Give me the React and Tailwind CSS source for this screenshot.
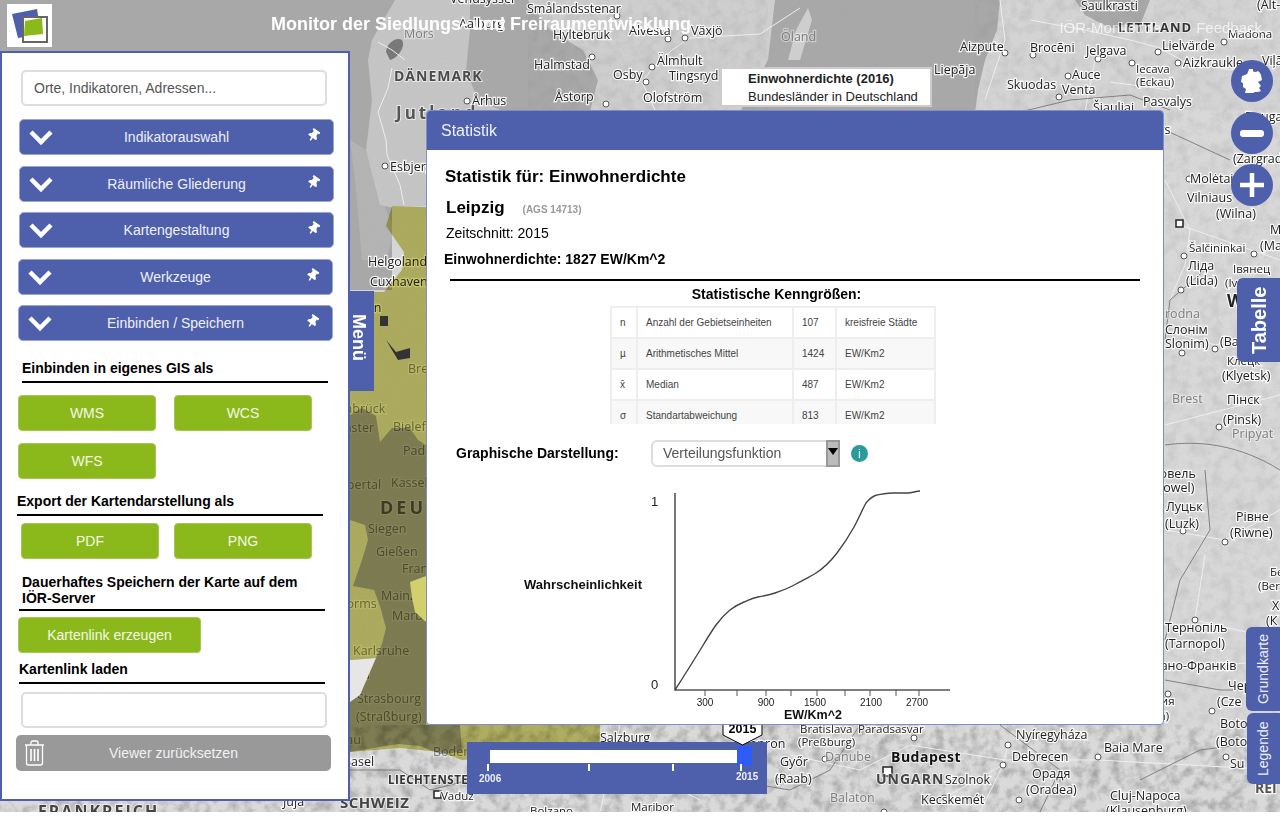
import { FaThumbtack } from "react-icons/fa";

// map labels: text, x, baseline y, kind (n normal, g faded, b bold city, c country)
const LABELS = [
  ["Vendsyssel", 450, 3, "n"], ["Smålandsstenar", 527, 13, "n"], ["Hyltebruk", 553, 39, "n"], ["Aalborg", 459, 28, "n"],
  ["Mors", 404, 38, "g"], ["Alvesta", 629, 35, "n"], ["Växjö", 691, 35, "n"], ["Halmstad", 534, 69, "n"], ["Älmhult", 657, 65, "n"],
  ["Osby", 613, 79, "n"], ["Tingsryd", 669, 80, "n"], ["Åstorp", 555, 101, "n"], ["Olofström", 643, 102, "n"], ["Århus", 472, 105, "n"],
  ["Öland", 781, 41, "g"], ["Aizpute", 960, 51, "n"], ["Brocēni", 1030, 52, "n"], ["Jelgava", 1086, 55, "n"], ["Liepāja", 934, 74, "n"],
  ["Skuodas", 1007, 89, "n"], ["Auce", 1072, 79, "n"], ["Venta", 1062, 94, "n"], ["Iecava", 1136, 73, "s"], ["(Eckau)", 1136, 86, "s"],
  ["Pasvalys", 1143, 106, "n"], ["Lielvärde", 1162, 50, "n"], ["Aizkraukle", 1183, 67, "n"], ["Madona", 1228, 38, "s"], ["Saulkrasti", 1081, 10, "n"],
  ["Viļāni", 1262, 65, "n"], ["(Alt-", 1257, 9, "n"], ["Šiauliai", 1093, 112, "n"], ["Daugavpils", 1245, 121, "n"], ["Panevėžys", 1110, 134, "n"], ["(Zargrad", 1233, 163, "n"],
  ["Molėtai", 1190, 183, "n"], ["Vilniaus", 1187, 202, "n"], ["(Wilna)", 1216, 218, "n"], ["M", 1270, 234, "n"], ["(Ma", 1260, 250, "n"],
  ["Šalčininkai", 1189, 252, "s"], ["Ліда", 1188, 270, "n"], ["(Lida)", 1186, 285, "n"], ["Iвянец", 1233, 273, "s"], ["(Iv", 1225, 287, "s"],
  ["W", 1227, 307, "b"], ["rodna", 1165, 318, "g"], ["Слонім", 1165, 334, "n"], ["Slonim)", 1165, 348, "n"], ["(Ba", 1220, 346, "n"],
  ["Клецк", 1227, 365, "s"], ["(Klyetsk)", 1222, 380, "n"], ["Brest", 1172, 403, "g"], ["Пінск", 1227, 404, "n"], ["(Pinsk)", 1223, 424, "n"], ["Pripyat", 1232, 438, "g"],
  ["Ковель", 1152, 478, "n"], ["(Kowel)", 1152, 492, "n"], ["Луцьк", 1166, 511, "n"], ["(Luzk)", 1165, 528, "n"], ["Рівне", 1236, 521, "n"], ["(Riwne)", 1230, 537, "n"],
  ["Бе", 1270, 576, "s"], ["(Ber", 1258, 590, "s"], ["Х", 1272, 610, "n"], ["(К", 1266, 625, "n"], ["Тернопіль", 1165, 632, "n"], ["(Tarnopol)", 1165, 648, "n"],
  ["Івано-Франків", 1150, 670, "n"], ["Чер", 1228, 690, "n"], ["(Cze", 1217, 706, "n"], ["Коломия", 1125, 705, "s"], ["(Kolomea)", 1115, 720, "s"], ["Boto", 1220, 728, "n"], ["(Boto", 1216, 746, "n"], ["Su", 1230, 768, "n"],
  ["REI", 1255, 793, "c"],
  ["Bratislava", 800, 733, "s"], ["(Preßburg)", 798, 746, "s"], ["Paradsasvar", 858, 733, "s"], ["Győr", 780, 766, "n"], ["(Raab)", 775, 783, "n"], ["Danube", 825, 761, "g"],
  ["Szolnok", 945, 784, "n"], ["Kecskemét", 921, 804, "n"], ["Balaton", 830, 802, "g"], ["Nyíregyháza", 1016, 739, "n"], ["Debrecen", 1012, 761, "n"],
  ["Орадя", 1032, 778, "n"], ["(Oradea)", 1026, 794, "n"], ["Baia Mare", 1104, 752, "n"], ["Cluj-Napoca", 1110, 800, "n"], ["(Klausenburg)", 1106, 815, "n"],
  ["Salzburg", 600, 742, "n"], ["Sopron", 743, 748, "n"], ["Maribor", 631, 811, "s"], ["Vaduz", 441, 800, "s"], ["Bolzano", 530, 815, "s"], ["Basel", 343, 766, "n"],
  ["Juja", 283, 806, "n"], ["Esbjerg", 390, 171, "n"], ["Helgoland", 368, 266, "n"], ["Cuxhaven", 370, 286, "n"], ["Bremerhaven", 302, 312, "n"],
  ["Bremen", 408, 373, "g"], ["Delmenhorst", 290, 372, "g"], ["Osnabrück", 322, 413, "g"], ["Münster", 325, 432, "g"], ["Bielefeld", 393, 431, "g"], ["Paderborn", 403, 455, "g"],
  ["Wuppertal", 320, 489, "g"], ["Kassel", 391, 487, "g"], ["Siegen", 368, 533, "g"], ["Gießen", 376, 556, "g"], ["Frankfurt", 402, 573, "g"], ["Mainz", 381, 600, "g"], ["Marburg", 392, 620, "g"],
  ["Worms", 335, 608, "g"], ["Karlsruhe", 353, 655, "g"], ["Pforzheim", 310, 679, "n"], ["Strasbourg", 357, 703, "g"], ["(Straßburg)", 356, 721, "g"], ["Freiburg im Breisgau", 240, 744, "g"],
  ["Bodensee", 433, 756, "g"],
];

const BIG_LABELS = [
  ["DÄNEMARK", 394, 81, 14, "#4a4a4a", 1],
  ["Jutland", 396, 119, 17, "#555", 3],
  ["LETTLAND", 1118, 32, 13, "#333", 1],
  ["DEUTSCHLAND", 380, 514, 18, "#666", 3],
  ["Budapest", 891, 762, 14, "#111", 0.5],
  ["UNGARN", 876, 784, 14, "#444", 1],
  ["LIECHTENSTEIN", 388, 784, 11.5, "#333", 0.5],
  ["SCHWEIZ", 340, 808, 15, "#444", 0.5],
  ["FRANKREICH", 38, 817, 16, "#444", 2],
];

const DOTS = [
  [592, 57], [617, 16], [668, 39], [685, 38], [652, 67], [646, 82], [606, 104], [467, 101], [1005, 53], [1033, 55], [1098, 59], [958, 71], [1068, 76],
  [1132, 63], [1158, 52], [1178, 63], [1224, 42], [1059, 97], [1189, 179], [1184, 256], [1254, 254], [1181, 290], [1182, 353], [1215, 349], [1219, 427],
  [1183, 531], [1225, 542], [1195, 620], [1212, 711], [1168, 694], [825, 759], [780, 776], [944, 798], [1008, 745], [1003, 765], [1019, 800], [1098, 757], [1226, 757], [914, 738], [884, 812], [385, 166],
];

const ROADS = [
  "M405 60L392 50L378 42M392 68L388 88L378 112L386 140L387 155L400 185L404 205",
  "M655 110L642 82L655 65L672 50L690 38L760 34L800 8",
  "M1000 0L1005 40L985 100M1030 20L1085 30L1130 40L1160 48L1185 62L1230 70L1280 60M1095 60L1085 112M1110 82L1170 90",
  "M1165 180L1190 230L1185 265L1170 300M1180 225L1280 260M1165 330L1215 345L1280 330M1165 425L1280 395",
  "M1165 530L1225 540L1280 510M1205 555L1195 620L1280 640M1165 670L1280 660",
  "M790 755L860 770L910 745L1005 760L1098 760L1280 770M1003 765L944 798M1008 745L1003 765L980 812M620 725L600 812M470 780L640 770L700 800",
];

const BORDERS = [
  "M1020 112L1070 100L1130 95L1170 110M1165 130L1230 160M1205 270L1170 300L1165 340M1165 445C1200 440 1240 445 1280 470",
  "M1205 470L1210 530L1180 580L1165 640M1165 680L1220 690L1280 690",
  "M1140 780L1200 750L1280 740M1000 725L1060 770L1040 812M860 725L830 770L790 790L730 780",
  "M350 770L400 770L430 790L470 780",
];

function MapBackground() {
  return (
    <svg className="absolute top-0 left-0 font-['Open_Sans',sans-serif]" width="1280" height="812" viewBox="0 0 1280 812">
      <defs>
        <filter id="hills" x="0" y="0" width="100%" height="100%">
          <feTurbulence type="fractalNoise" baseFrequency="0.09" numOctaves="4" seed="4" />
          <feColorMatrix values="0 0 0 0 0.25  0 0 0 0 0.25  0 0 0 0 0.25  1.5 0 0 0 -0.6" />
        </filter>
        <filter id="fine" x="0" y="0" width="100%" height="100%">
          <feTurbulence type="fractalNoise" baseFrequency="0.6" numOctaves="2" seed="8" />
          <feColorMatrix values="0 0 0 0 0.4  0 0 0 0 0.4  0 0 0 0 0.4  0.4 0 0 0 -0.1" />
        </filter>
      </defs>
      <rect width="1280" height="812" fill="#a8a8a8" />
      <path d="M366 150L350 140L355 180L362 260L385 262L395 230L384 205Z" fill="#b4b4b4" />
      <path d="M395 0L372 40L368 60L372 100L366 150L380 205L426 215L560 215L590 112L598 80L583 50L550 30L528 0Z" fill="#c6c6c6" />
      <path d="M470 0L470 30L466 70L478 100L505 112L590 112L598 80L583 50L550 30L528 0Z" fill="#a8a8a8" />
      <path d="M528 0L550 30L583 50L598 80L590 112L740 112L768 60L775 0Z" fill="#d0d0d0" />
      <path d="M1000 0L997 30L985 60L978 90L975 112L975 725L1280 725L1280 0Z" fill="#d6d6d6" />
      <path d="M1075 0L1085 15L1110 28L1140 25L1150 0Z" fill="#a8a8a8" />
      <path d="M350 725H1280V812H0V801H350Z" fill="#dcdcdc" />
      <path d="M1164 110H1280V725H1164Z" fill="#dadada" />
      <path d="M350 290H640V725H350Z" fill="#d8d8d8" />
      <path d="M392 206H640V290H392Z" fill="#d8d8d8" />
      <path d="M788 60L796 30L808 8L812 20L800 60Z" fill="#d0d0d0" />
      <path d="M386 52C386 44 396 36 402 40C406 46 398 58 390 60Z" fill="#777" />
      <rect width="1280" height="812" filter="url(#fine)" opacity="0.5" />
      <rect x="975" width="305" height="725" filter="url(#hills)" opacity="0.3" />
      <rect x="528" width="240" height="112" filter="url(#hills)" opacity="0.3" />
      <rect y="725" width="1280" height="87" filter="url(#hills)" opacity="0.9" />
      <g fill="none" stroke="#eee" strokeWidth="1">
        {ROADS.map((d) => <path key={d} d={d} />)}
      </g>
      <g fill="none" stroke="#777" strokeWidth="0.9">
        {BORDERS.map((d) => <path key={d} d={d} />)}
      </g>
      {DOTS.map(([x, y]) => (
        <circle key={`${x}-${y}`} cx={x} cy={y} r="3" fill="#fff" stroke="#555" strokeWidth="1" />
      ))}
      <rect x="883" y="767" width="9" height="9" fill="#fff" stroke="#222" strokeWidth="1.5" />
      <rect x="434" y="791" width="7" height="7" fill="#fff" stroke="#222" strokeWidth="1.5" />
      <rect x="1176" y="220" width="7" height="7" fill="#fff" stroke="#222" strokeWidth="1.5" />
      {LABELS.map(([t, x, y, k]) => (
        <text
          key={t + x}
          x={x}
          y={y}
          fontSize={k === "s" ? 11.5 : k === "c" ? 14 : k === "b" ? 17 : 12.5}
          fontWeight={k === "b" || k === "c" ? 700 : 400}
          fill={k === "g" ? "#7d7d7d" : k === "c" ? "#555" : "#222"}
          stroke="#fff"
          strokeOpacity={k === "g" ? 0.4 : 0.85}
          strokeWidth="2.4"
          paintOrder="stroke"
        >
          {t}
        </text>
      ))}
      {BIG_LABELS.map(([t, x, y, size, color, ls]) => (
        <text key={t} x={x} y={y} fontSize={size} fontWeight="700" fill={color} letterSpacing={ls} stroke="#fff" strokeOpacity="0.6" strokeWidth="2" paintOrder="stroke">
          {t}
        </text>
      ))}
      {/* choropleth layer over germany */}
      <path className="mix-blend-multiply" d="M392 206L640 214V725H600V742L575 752L462 760L440 752L400 748L350 752V292H384L392 282L402 270L404 252L386 226Z" fill="#cdcb70" />
      <path className="mix-blend-multiply" d="M350 415L362 408L376 416L380 442L392 428L410 428L418 440L426 445V725H460L462 752L440 754L420 746L398 744L350 752V660L376 658L382 644L386 628L380 606L374 590L353 586L362 560L368 540L365 525L350 520Z" fill="#b8b8dc" />
      <path d="M410 582L426 576V622L415 612L412 598Z" fill="#d2d06d" />
      <path d="M350 660L376 658L360 695L350 702Z" fill="#e6e6e6" />
      <path d="M388 316H380V326H388Z" fill="#333" />
      <path d="M386 340L396 352L410 348V358L398 360Z" fill="#333" />
    </svg>
  );
}

function Logo() {
  return (
    <svg className="block bg-white" width="45" height="43" viewBox="0 0 45 43">
      <path d="M5 10L30 5L34 30L11 34Z" fill="#4e5fab" />
      <rect x="16" y="13" width="24" height="25" fill="#fff" stroke="#666" strokeWidth="2" />
      <path d="M18 17L35 14L36 30L17 32Z" fill="#8bb81b" />
    </svg>
  );
}

function AccordionButton({ label, className }) {
  return (
    <div className={`relative flex items-center justify-center h-[36px] w-[315px] rounded-[5px] border border-[#9aa5d0] bg-[#4e5fab] text-[14px] text-[#eef0f8] ${className}`}>
      <svg className="absolute left-[8px] top-[9px]" width="26" height="18" viewBox="0 0 26 18">
        <path d="M3 3L13 13L23 3" fill="none" stroke="#fff" strokeWidth="4.5" />
      </svg>
      <FaThumbtack className="absolute right-[13px] top-[9px] rotate-[35deg] text-white" size={13} />
      {label}
    </div>
  );
}

function GreenButton({ label, className = "w-[138px]" }) {
  return (
    <div className={`flex items-center justify-center h-[36px] rounded-[4px] border border-[#a6c758] bg-[#8bb81b] text-[14px] text-[#f4f8e6] ${className}`}>
      {label}
    </div>
  );
}

function SectionTitle({ className, pad = "pb-[5px]", children }) {
  return (
    <div className={`w-[306px] border-b-2 border-black text-[14px] leading-[16px] font-bold text-black ${pad} ${className}`}>
      {children}
    </div>
  );
}

function SidePanel() {
  return (
    <div className="absolute left-0 top-[51px] flex flex-col w-[350px] h-[750px] border-2 border-[#4e5fab] bg-white">
      <div className="flex items-center mt-[17px] ml-[19px] w-[306px] h-[36px] pl-[11px] rounded-[5px] border-2 border-[#ddd] text-[14px] text-[#555]">
        Orte, Indikatoren, Adressen...
      </div>
      <AccordionButton label="Indikatorauswahl" className="mt-[13px] ml-[17px]" />
      <AccordionButton label="Räumliche Gliederung" className="mt-[11px] ml-[17px]" />
      <AccordionButton label="Kartengestaltung" className="mt-[10px] ml-[17px]" />
      <AccordionButton label="Werkzeuge" className="mt-[11px] ml-[16px]" />
      <AccordionButton label="Einbinden / Speichern" className="mt-[10px] ml-[16px]" />
      <SectionTitle className="mt-[19px] ml-[20px]">Einbinden in eigenes GIS als</SectionTitle>
      <div className="flex gap-[18px] mt-[12px] ml-[16px]">
        <GreenButton label="WMS" />
        <GreenButton label="WCS" />
      </div>
      <div className="flex mt-[12px] ml-[16px]">
        <GreenButton label="WFS" />
      </div>
      <SectionTitle className="mt-[14px] ml-[15px]">Export der Kartendarstellung als</SectionTitle>
      <div className="flex gap-[15px] mt-[7px] ml-[19px]">
        <GreenButton label="PDF" />
        <GreenButton label="PNG" />
      </div>
      <SectionTitle className="mt-[15px] ml-[17px] pl-[3px]" pad="pb-[3px]">
        Dauerhaftes Speichern der Karte auf dem IÖR-Server
      </SectionTitle>
      <GreenButton label="Kartenlink erzeugen" className="w-[183px] mt-[6px] ml-[16px]" />
      <SectionTitle className="mt-[8px] ml-[17px]">Kartenlink laden</SectionTitle>
      <div className="mt-[8px] ml-[19px] w-[306px] h-[36px] rounded-[5px] border-2 border-[#ddd]" />
      <div className="relative flex items-center justify-center mt-[7px] ml-[14px] w-[315px] h-[36px] rounded-[5px] bg-[#999] text-[14px] text-[#f2f2f2]">
        <svg className="absolute left-[8px] top-[5px]" width="21" height="26" viewBox="0 0 21 26" fill="none" stroke="#fff" strokeWidth="1.3">
          <path d="M1 5H20M7 5V2.5Q7 1 8.5 1H12.5Q14 1 14 2.5V5" />
          <path d="M2.5 5V23Q2.5 25 4.5 25H16.5Q18.5 25 18.5 23V5" />
          <path d="M7 9V21M10.5 9V21M14 9V21" strokeWidth="1.6" />
        </svg>
        Viewer zurücksetzen
      </div>
    </div>
  );
}

const STATS = [
  ["n", "Anzahl der Gebietseinheiten", "107", "kreisfreie Städte"],
  ["µ", "Arithmetisches Mittel", "1424", "EW/Km2"],
  ["x̄", "Median", "487", "EW/Km2"],
  ["σ", "Standartabweichung", "813", "EW/Km2"],
];

function StatsTable() {
  return (
    <div className="mt-[4px] ml-[183px] w-[326px] h-[118px] shrink-0 overflow-hidden">
      <table className="w-[324px] table-fixed border-collapse text-[10px] text-[#444]">
        <tbody>
          {STATS.map((row, i) => (
            <tr key={row[0]} className={`h-[31px] ${i % 2 === 1 ? "bg-[#f8f8f8]" : "bg-white"}`}>
              <td className="w-[26px] border-2 border-[#eee] pl-[8px]">{row[0]}</td>
              <td className="w-[156px] border-2 border-[#eee] pl-[8px]">{row[1]}</td>
              <td className="w-[43px] border-2 border-[#eee] pl-[8px]">{row[2]}</td>
              <td className="w-[99px] border-2 border-[#eee] pl-[8px]">{row[3]}</td>
            </tr>
          ))}
        </tbody>
      </table>
    </div>
  );
}

function DistributionChart() {
  const ticks = [705, 737, 766, 791, 817, 845, 870, 896, 919];
  const labels = [[705, "300"], [766, "900"], [815, "1500"], [871, "2100"], [917, "2700"]];
  return (
    <svg width="736" height="257" viewBox="427 467 736 257" className="block shrink-0">
      <text x="524" y="589" fontSize="13" fontWeight="700" fill="#111">Wahrscheinlichkeit</text>
      <text x="651" y="506" fontSize="13" fill="#222">1</text>
      <text x="651" y="689" fontSize="13" fill="#222">0</text>
      <path d="M675 493V690H950" fill="none" stroke="#555" strokeWidth="1.6" />
      {ticks.map((x) => <path key={x} d={`M${x} 690V696`} stroke="#555" />)}
      <path
        d="M675 690C684 676 694 660 702 647C708 637 711 632 716 625C721 618 725 614 730 610C735 606 739 604 744 602C749 600 752 598 758 597C764 596 769 595 775 593C781 591 789 588 796 584C803 580 810 577 816 573C824 568 830 562 837 553C844 544 849 536 854 527C859 518 862 510 866 503C870 498 873 496 877 495C882 494 886 493 892 493C898 493 902 493 908 493C912 493 916 491 920 491"
        fill="none"
        stroke="#444"
        strokeWidth="1.4"
      />
      {labels.map(([x, t]) => (
        <text key={t} x={x} y="706" fontSize="10" textAnchor="middle" fill="#222">{t}</text>
      ))}
      <text x="813" y="719" fontSize="12.5" fontWeight="700" textAnchor="middle" fill="#111">EW/Km^2</text>
    </svg>
  );
}

function StatisticsModal() {
  return (
    <div className="absolute left-[426px] top-[110px] flex flex-col w-[738px] h-[615px] overflow-hidden rounded-[4px] border border-[#7f8dcc] bg-white text-black">
      <div className="flex items-center h-[39px] shrink-0 pl-[14px] bg-[#4e5fab] text-[16px] text-[#eef0f8]">Statistik</div>
      <div className="mt-[17px] ml-[18px] text-[17px] leading-[20px] font-bold">Statistik für: Einwohnerdichte</div>
      <div className="flex items-baseline gap-[18px] mt-[11px] ml-[19px] h-[20px] leading-[20px]">
        <span className="text-[17px] font-bold">Leipzig</span>
        <span className="text-[10px] font-bold text-[#999]">(AGS 14713)</span>
      </div>
      <div className="mt-[6px] ml-[19px] text-[14px] leading-[18px]">Zeitschnitt: 2015</div>
      <div className="mt-[8px] ml-[17px] text-[14px] leading-[18px] font-bold">Einwohnerdichte: 1827 EW/Km^2</div>
      <div className="mt-[11px] ml-[23px] w-[690px] h-[2px] bg-black" />
      <div className="mt-[5px] ml-[183px] w-[333px] text-center text-[14px] leading-[16px] font-bold">Statistische Kenngrößen:</div>
      <StatsTable />
      <div className="flex items-center mt-[16px] ml-[29px] h-[27px] shrink-0">
        <div className="w-[195px] text-[14px] font-bold">Graphische Darstellung:</div>
        <div className="flex items-stretch justify-between w-[189px] h-[27px] pl-[10px] rounded-l-[6px] border-2 border-[#ddd] border-r-0 text-[14px] text-[#555]">
          <span className="self-center">Verteilungsfunktion</span>
          <span className="flex justify-center w-[14px] -my-[2px] border-2 border-[#999] bg-[#bbb] pt-[6px]">
            <span className="w-0 h-0 border-x-[5px] border-x-transparent border-t-[7px] border-t-black" />
          </span>
        </div>
        <div className="flex items-center justify-center ml-[11px] w-[17px] h-[17px] rounded-full bg-[#2b9a9a] text-[13px] leading-none text-white">i</div>
      </div>
      <DistributionChart />
    </div>
  );
}

function Timeline() {
  return (
    <>
      <div className="absolute left-[467px] top-[742px] w-[300px] h-[52px] bg-[#4e5fab]">
        <div className="flex items-start ml-[23px] mt-[4px]">
          <div className="w-[247px] h-[13px] mt-[4px] bg-white" />
          <div className="w-[15px] h-[20px] bg-[#2f5cf7]" />
        </div>
        <div className="absolute left-[20px] top-[22px] w-[2px] h-[7px] bg-white" />
        <div className="absolute left-[121px] top-[22px] w-[2px] h-[7px] bg-white" />
        <div className="absolute left-[205px] top-[22px] w-[2px] h-[7px] bg-white" />
        <div className="absolute left-[273px] top-[22px] w-[2px] h-[7px] bg-white" />
        <div className="absolute left-[12px] top-[29px] text-[10px] font-bold text-[#eef0f8]">2006</div>
        <div className="absolute left-[269px] top-[27px] text-[10px] font-bold text-[#eef0f8]">2015</div>
      </div>
      <div className="absolute left-[722px] top-[716px] flex justify-center w-[41px] h-[31px]">
        <svg className="absolute top-0 left-0" width="41" height="31" viewBox="0 0 41 31">
          <path d="M1 1H40V19L20.5 29L1 19Z" fill="#fff" stroke="#000" />
        </svg>
        <span className="relative mt-[4px] text-[12.5px] font-bold text-black">2015</span>
      </div>
    </>
  );
}

function MapControls() {
  const circle = "flex items-center justify-center w-[42px] h-[42px] rounded-full bg-[#4e5fab]";
  return (
    <div className="absolute left-[1231px] top-[60px] flex flex-col gap-[10px]">
      <div className={circle}>
        <svg width="24" height="26" viewBox="0 0 24 26" fill="#fff">
          <path d="M9 1L13 1L13 3.5L16 4L18 3L20 5L21 7L22 12L20 13L18 14L21 18L19 20L21 23L18 24L15 24L13 25L9 25L5 25L6 21L3 19L3 15L1 14L2 8L5 7L7 6L8 4Z" />
        </svg>
      </div>
      <div className={circle}>
        <div className="w-[24px] h-[7px] rounded-[3px] bg-white" />
      </div>
      <div className={circle}>
        <svg width="26" height="26" viewBox="0 0 26 26"><path d="M1 13H25M13 1V25" stroke="#fff" strokeWidth="4.5" /></svg>
      </div>
    </div>
  );
}

export default function App() {
  return (
    <div className="relative w-[1280px] h-[820px] overflow-hidden bg-white font-['Liberation_Sans',Arial,sans-serif]">
      <MapBackground />
      <div className="absolute top-0 left-0 flex items-start w-[1280px] h-[48px]">
        <div className="mt-[4px] ml-[7px]"><Logo /></div>
        <div className="mt-[13px] ml-[219px] text-[18px] leading-[22px] font-bold text-white">Monitor der Siedlungs- und Freiraumentwicklung</div>
        <div className="mt-[19px] ml-auto mr-[18px] flex gap-[35px] text-[15px] leading-[18px] text-white/70">
          <span>IÖR-Monitor.de</span>
          <span>Feedback</span>
        </div>
      </div>
      <SidePanel />
      <div className="absolute left-[350px] top-[291px] flex items-center justify-center w-[24px] h-[100px] pr-[8px] pb-[8px] bg-[#4e5fab] text-[18px] font-bold text-white [writing-mode:vertical-rl]">Menü</div>
      <div className="absolute left-[720px] top-[67px] w-[212px] h-[40px] pl-[26px] pt-[1px] border-2 border-[#ccc] bg-white text-[13px] leading-[18px] text-[#222]">
        <div className="font-bold">Einwohnerdichte (2016)</div>
        <div>Bundesländer in Deutschland</div>
      </div>
      <Timeline />
      <StatisticsModal />
      <MapControls />
      <div className="absolute left-[1237px] top-[278px] flex items-center justify-center w-[43px] h-[84px] rounded-r-[6px] bg-[#4e5fab] pr-[2px] text-[20px] font-bold text-white [writing-mode:vertical-rl] rotate-180">Tabelle</div>
      <div className="absolute left-[1246px] top-[627px] flex items-center justify-center w-[34px] h-[84px] rounded-r-[6px] bg-[#4e5fab] text-[14px] text-[#eef0f8] [writing-mode:vertical-rl] rotate-180">Grundkarte</div>
      <div className="absolute left-[1247px] top-[713px] flex items-center justify-center w-[33px] h-[71px] rounded-r-[6px] bg-[#4e5fab] text-[14px] text-[#eef0f8] [writing-mode:vertical-rl] rotate-180">Legende</div>
    </div>
  );
}
